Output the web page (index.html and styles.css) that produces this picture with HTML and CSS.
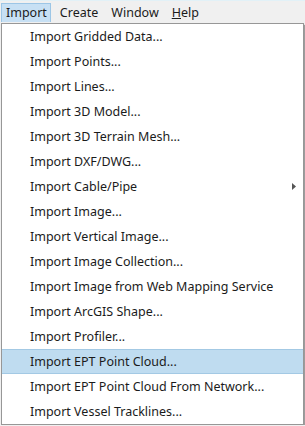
FILE: index.html
```html
<!DOCTYPE html>
<html lang="en">
<head>
  <meta charset="UTF-8">
  <title>Import Menu</title>
  <link rel="stylesheet" href="styles.css">
</head>
<body>
  <header class="menubar">
    <span class="menubar-item open">Import</span>
    <span class="menubar-item">Create</span>
    <span class="menubar-item">Window</span>
    <span class="menubar-item"><u>H</u>elp</span>
  </header>

  <ul class="menu">
    <li class="menu-item">Import Gridded Data...</li>
    <li class="menu-item">Import Points...</li>
    <li class="menu-item">Import Lines...</li>
    <li class="menu-item">Import 3D Model...</li>
    <li class="menu-item">Import 3D Terrain Mesh...</li>
    <li class="menu-item">Import DXF/DWG...</li>
    <li class="menu-item has-sub">Import Cable/Pipe
      <svg class="sub-arrow" width="4" height="7" viewBox="0 0 4 7"><path d="M0 0 L4 3.5 L0 7 Z" fill="#555"/></svg>
    </li>
    <li class="menu-item">Import Image...</li>
    <li class="menu-item">Import Vertical Image...</li>
    <li class="menu-item">Import Image Collection...</li>
    <li class="menu-item">Import Image from Web Mapping Service</li>
    <li class="menu-item">Import ArcGIS Shape...</li>
    <li class="menu-item">Import Profiler...</li>
    <li class="menu-item active">Import EPT Point Cloud...</li>
    <li class="menu-item">Import EPT Point Cloud From Network...</li>
    <li class="menu-item">Import Vessel Tracklines...</li>
  </ul>
</body>
</html>
```

FILE: styles.css
```css
body {
  margin: 0;
  font-family: 'Noto Sans', 'Open Sans', sans-serif;
  font-size: 12.5px;
  color: #1b1b1b;
  background: #f0f0f0;
}

.menubar {
  display: flex;
  height: 22px;
  padding: 2px 0 0 1px;
  box-sizing: border-box;
  border-top: 1px solid #e2f1f7;
  background: #f0f0f0;
}

.menubar-item {
  padding: 0 3px 0 4px;
  margin-right: 4px;
  line-height: 18px;
  border: 1px solid transparent;
}

.menubar-item.open {
  background: #c7e0f4;
  border-color: #9cc6e6;
  border-bottom: none;
}

.menu {
  list-style: none;
  margin: 1px 0 0 1px;
  padding: 0;
  width: 301px;
  background: #fff;
  border: 1px solid #979797;
  box-shadow: 2px 2px 1px rgba(0, 0, 0, 0.35);
}

.menu-item {
  display: flex;
  align-items: center;
  height: 25px;
  padding-left: 28px;
  box-sizing: border-box;
  border: 1px solid transparent;
  border-left: none;
  border-right: none;
}

.menu-item.active {
  background: #bfdcf0;
  border-color: #a3c9e4;
}

.has-sub {
  justify-content: space-between;
  padding-right: 7px;
}
```
